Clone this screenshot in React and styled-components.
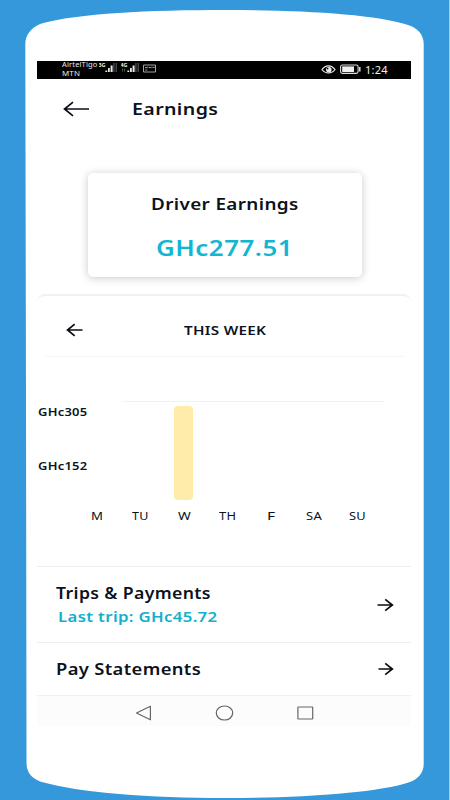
import React, { useLayoutEffect, useRef, useState } from "react";
import styled, { createGlobalStyle } from "styled-components";

const GlobalStyle = createGlobalStyle`
  * {
    box-sizing: border-box;
  }
  body {
    margin: 0;
    font-family: "Noto Sans", "Open Sans", sans-serif;
  }
`;

const Page = styled.div`
  width: 450px;
  height: 800px;
  overflow: hidden;
  background-color: #3498db;
  border-right: 1px solid #a3cdec;
`;

// phone outline, bulging at the top and bottom
const Frame = styled.div`
  width: 450px;
  height: 800px;
  padding: 61px 39px 0px 37px;
  background-color: #ffffff;
  clip-path: path(
    "M25.3 44 C25.3 35 31 28 40 24 C78 13 150 10 225 10 C300 10 375 14 408 25 C418 28 423.7 35 423.7 44 L423.7 764 C423.7 773 418 779 410 782 C378 793 300 798 225 798 C150 798 80 793 40 781.5 C32 778 26.5 773 26.5 763 L26 400 Z"
  );
`;

const StatusBar = styled.div`
  display: flex;
  justify-content: space-between;
  height: 17.5px;
  padding: 0px 23px 0px 25px;
  background-color: #000000;
  color: #e8e8e8;
`;
const StatusGroup = styled.div`
  display: flex;
  align-items: ${(props) => props.$align || "center"};
  gap: ${(props) => props.$gap || 0}px;
`;
const Carriers = styled.div`
  width: 36px;
  margin-top: -1px;
`;

const Header = styled.div`
  display: flex;
  align-items: center;
  height: 60.5px;
  padding-left: 26px;
  gap: 42px;
`;

const Card = styled.div`
  width: 274px;
  height: 104px;
  margin: 34px 0px 0px 51px;
  padding-top: 19px;
  display: flex;
  flex-direction: column;
  align-items: center;
  border-radius: 5px;
  background-color: #ffffff;
  box-shadow: 0px 1px 9px rgba(0, 0, 0, 0.22);
`;

const Panel = styled.div`
  height: 272px;
  margin-top: 17px;
  border-top: 2px solid #f1f1f1;
  border-radius: 8px 8px 0px 0px;
`;
const WeekBar = styled.div`
  display: grid;
  grid-template-columns: 118px 1fr;
  align-items: center;
  height: 61px;
  margin: 0px 6px 0px 8px;
  padding: 8px 0px 0px 21px;
  border-bottom: 1px solid #f7f7f7;
`;

const Chart = styled.div`
  display: flex;
  height: 104px;
  margin-top: 44px;
`;
const Scale = styled.div`
  width: 86px;
  display: flex;
  flex-direction: column;
  gap: 33.5px;
  padding: 1px 0px 0px 1px;
`;
const Plot = styled.div`
  width: 262px;
  border-top: 1px solid #f2f2f2;
`;
const Bar = styled.div`
  width: 19px;
  margin: 4px 0px 0px 51px;
  border-radius: 4px;
  background-color: #ffebaa;
`;
const Days = styled.div`
  display: grid;
  grid-template-columns: repeat(7, 43.5px);
  justify-items: center;
  padding-left: 38px;
`;

const Row = styled.div`
  display: flex;
  align-items: center;
  justify-content: space-between;
  height: ${(props) => props.$height}px;
  padding: 0px 17px 0px 19px;
  border-top: 1px solid #eeeeee;
`;
const SubLine = styled.div`
  margin-top: -1px;
  padding-left: 2px;
`;

const NavBar = styled.div`
  display: flex;
  align-items: center;
  height: 31px;
  padding: 4px 0px 0px 98px;
  gap: 63px;
  border-top: 1px solid #f0f0f0;
  background-color: #fcfcfc;
`;

const TextBox = styled.div`
  width: ${(props) => props.$width}px;
  height: ${(props) => props.$line}px;
`;
const Letters = styled.span`
  display: inline-block;
  white-space: nowrap;
  transform-origin: 0 50%;
  font-size: ${(props) => props.$size}px;
  line-height: ${(props) => props.$line}px;
  font-weight: ${(props) => props.$weight};
  letter-spacing: 0.02em;
  color: ${(props) => props.$color};
  vertical-align: top;
`;

const Icon = styled.svg`
  display: block;
  flex: none;
  fill: none;
  stroke: ${(props) => props.$color || "#0b0e14"};
  stroke-width: ${(props) => props.$stroke || 1.7};
`;

// Widens the letters so the text fills the given width
const WideText = ({ children, width, size, line, weight = 500, color = "#0b1220" }) => {
  const ref = useRef(null);
  const [stretch, setStretch] = useState(1);

  useLayoutEffect(() => {
    setStretch(width / ref.current.offsetWidth);
  }, [width, children]);

  return (
    <TextBox $width={width} $line={line}>
      <Letters
        ref={ref}
        $size={size}
        $line={line}
        $weight={weight}
        $color={color}
        style={{ transform: `scaleX(${stretch})` }}
      >
        {children}
      </Letters>
    </TextBox>
  );
};

const Signal = ({ label, arrows }) => (
  <Icon width='19' height='12' viewBox='0 0 19 12' $color='none'>
    <text x='-0.5' y='6.2' fontSize='5.4' fontWeight='700' fill='#e8e8e8'>
      {label}
    </text>
    {arrows && <path d='M1.5 7.5v3M3.5 7.5v3' stroke='#555' strokeWidth='1' />}
    <path d='M6.4 11V9.4h1.8V11zM9 11V7h1.8v4zM11.6 11V4.5h2V11z' fill='#e8e8e8' />
    <path d='M14.3 11V2h1.2v9zM16.6 11V2h1.2v9z' fill='#555555' />
  </Icon>
);

const ForwardArrow = ({ width }) => (
  <Icon width={width} height='14' viewBox={`${17 - width} 0 ${width} 14`}>
    <path d={`M${17.5 - width} 7H15.5M8.2 1.3L15.4 7l-7.2 5.7`} />
  </Icon>
);

const days = [
  { name: "M", width: 12 },
  { name: "TU", width: 17 },
  { name: "W", width: 12.5 },
  { name: "TH", width: 17.5 },
  { name: "F", width: 8.5 },
  { name: "SA", width: 16.5 },
  { name: "SU", width: 17.5 },
];

const App = () => {
  return (
    <Page>
      <GlobalStyle />
      <Frame>
        <StatusBar>
          <StatusGroup $gap={1} $align='flex-start'>
            <Carriers>
              <WideText width={35} size={7.5} line={9} weight={400} color='#e8e8e8'>
                AirtelTigo
              </WideText>
              <WideText width={18} size={7.5} line={9} weight={400} color='#e8e8e8'>
                MTN
              </WideText>
            </Carriers>
            <StatusGroup $gap={3}>
              <Signal label='3G' />
              <Signal label='4G' arrows />
              <Icon width='13' height='12' viewBox='0 0 13 12' $color='#b5b5b5' $stroke={0.9}>
                <path d='M.5 4h12v7H.5zM2 6.6h2M4.8 5.6v1.6M6 6.6h2M9 5.6v1.6M10 6.3h1.8M2.2 9h2' />
              </Icon>
            </StatusGroup>
          </StatusGroup>
          <StatusGroup $gap={4}>
            <Icon width='15' height='11' viewBox='0 0 15 11' $color='#eeeeee' $stroke={1.2}>
              <path d='M1 5.5C3 2.8 5 1.8 7.5 1.8S12 2.8 14 5.5C12 8.2 10 9 7.5 9S3 8.2 1 5.5z' />
              <circle cx='7.8' cy='5.8' r='2.2' fill='#eeeeee' />
              <circle cx='6.6' cy='4.6' r='.9' fill='#000' stroke='none' />
            </Icon>
            <Icon width='21' height='11' viewBox='0 0 21 11' $color='#dddddd' $stroke={1.1}>
              <rect x='.6' y='1' width='17.5' height='8.4' rx='1.8' />
              <rect x='2.2' y='2.4' width='11.8' height='5.6' fill='#eeeeee' stroke='none' />
              <path d='M19.8 3v4.4' strokeWidth='1.5' />
            </Icon>
            <WideText width={23} size={11} line={16} weight={400} color='#eeeeee'>
              1:24
            </WideText>
          </StatusGroup>
        </StatusBar>

        <Header>
          <Icon width='27' height='16' viewBox='0 0 27 16'>
            <path d='M1.5 8H26M10 1.2L1.5 8l8.5 6.8' />
          </Icon>
          <WideText width={86.5} size={16.5} line={24} weight={600}>
            Earnings
          </WideText>
        </Header>

        <Card>
          <WideText width={147.5} size={16.5} line={24} weight={600}>
            Driver Earnings
          </WideText>
          <TextBox $line={15.5} />
          <WideText width={137.5} size={22} line={30} weight={600} color='#12b6d2'>
            GHc277.51
          </WideText>
        </Card>

        <Panel>
          <WeekBar>
            <Icon width='17' height='14' viewBox='0 0 17 14'>
              <path d='M16.5 7H1.5M8.7 1.2L1.5 7l7.2 5.8' />
            </Icon>
            <WideText width={82} size={13} line={18} weight={600}>
              THIS WEEK
            </WideText>
          </WeekBar>
          <Chart>
            <Scale>
              <WideText width={49.5} size={11.5} line={20} weight={600}>
                GHc305
              </WideText>
              <WideText width={49.5} size={11.5} line={20} weight={600}>
                GHc152
              </WideText>
            </Scale>
            <Plot>
              <Bar style={{ height: 94 }} />
            </Plot>
          </Chart>
          <Days>
            {days.map((day) => (
              <WideText key={day.name} width={day.width} size={11} line={22} weight={400}>
                {day.name}
              </WideText>
            ))}
          </Days>
        </Panel>

        <Row $height={76}>
          <div>
            <WideText width={155} size={15.5} line={24} weight={600}>
              Trips &amp; Payments
            </WideText>
            <SubLine>
              <WideText width={160} size={15} line={24} weight={600} color='#12b0cc'>
                Last trip: GHc45.72
              </WideText>
            </SubLine>
          </div>
          <ForwardArrow width={17} />
        </Row>
        <Row $height={53}>
          <WideText width={144.5} size={15.5} line={24} weight={600}>
            Pay Statements
          </WideText>
          <ForwardArrow width={16} />
        </Row>

        <NavBar>
          <Icon width='17' height='16' viewBox='0 0 17 16' $color='#666666' $stroke={1.2}>
            <path d='M1.5 8L15.4 1.2v13.6z' strokeLinejoin='round' />
          </Icon>
          <Icon width='19' height='16' viewBox='0 0 19 16' $color='#666666' $stroke={1.2}>
            <ellipse cx='9.5' cy='8' rx='8.2' ry='7' />
          </Icon>
          <Icon width='17' height='16' viewBox='0 0 17 16' $color='#666666' $stroke={1.2}>
            <rect x='.9' y='2' width='14.8' height='12' rx='.5' />
          </Icon>
        </NavBar>
      </Frame>
    </Page>
  );
};

export default App;
